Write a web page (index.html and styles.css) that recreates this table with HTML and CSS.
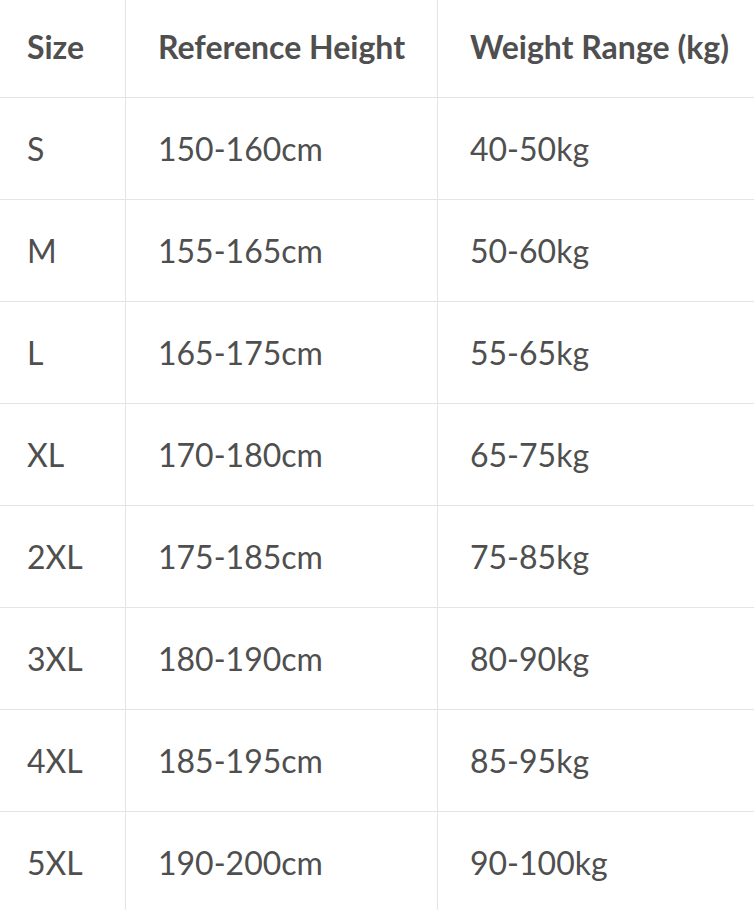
FILE: index.html
```html
<!DOCTYPE html>
<html lang="en">
<head>
<meta charset="utf-8">
<title>Size Chart</title>
<link rel="stylesheet" href="styles.css">
</head>
<body>
<table class="size-table">
  <thead>
    <tr><th>Size</th><th>Reference Height</th><th>Weight Range (kg)</th></tr>
  </thead>
  <tbody>
    <tr><td>S</td><td>150-160cm</td><td>40-50kg</td></tr>
    <tr><td>M</td><td>155-165cm</td><td>50-60kg</td></tr>
    <tr><td>L</td><td>165-175cm</td><td>55-65kg</td></tr>
    <tr><td>XL</td><td>170-180cm</td><td>65-75kg</td></tr>
    <tr><td>2XL</td><td>175-185cm</td><td>75-85kg</td></tr>
    <tr><td>3XL</td><td>180-190cm</td><td>80-90kg</td></tr>
    <tr><td>4XL</td><td>185-195cm</td><td>85-95kg</td></tr>
    <tr><td>5XL</td><td>190-200cm</td><td>90-100kg</td></tr>
  </tbody>
</table>
</body>
</html>
```
FILE: styles.css
```css
html, body {
  margin: 0;
  padding: 0;
  background: #ffffff;
}
body {
  font-family: Lato, "Open Sans", sans-serif;
  color: #4f4f4f;
  overflow: hidden;
}
.size-table {
  width: 754px;
  border-collapse: separate;
  border-spacing: 0;
  table-layout: fixed;
}
.size-table th,
.size-table td {
  box-sizing: border-box;
  height: 102px;
  padding: 2px 0 0 32px;
  border-bottom: 1px solid #e4e4e4;
  text-align: left;
  vertical-align: middle;
  font-size: 32px;
  line-height: 1.2;
  white-space: nowrap;
}
.size-table th {
  height: 98px;
  padding-top: 0;
  padding-bottom: 2px;
  font-weight: 700;
}
.size-table td {
  font-weight: 400;
}
.size-table th:first-child,
.size-table td:first-child {
  width: 126px;
  padding-left: 27px;
  border-right: 1px solid #e4e4e4;
}
.size-table th:nth-child(2),
.size-table td:nth-child(2) {
  width: 312px;
  border-right: 1px solid #e4e4e4;
}
```
